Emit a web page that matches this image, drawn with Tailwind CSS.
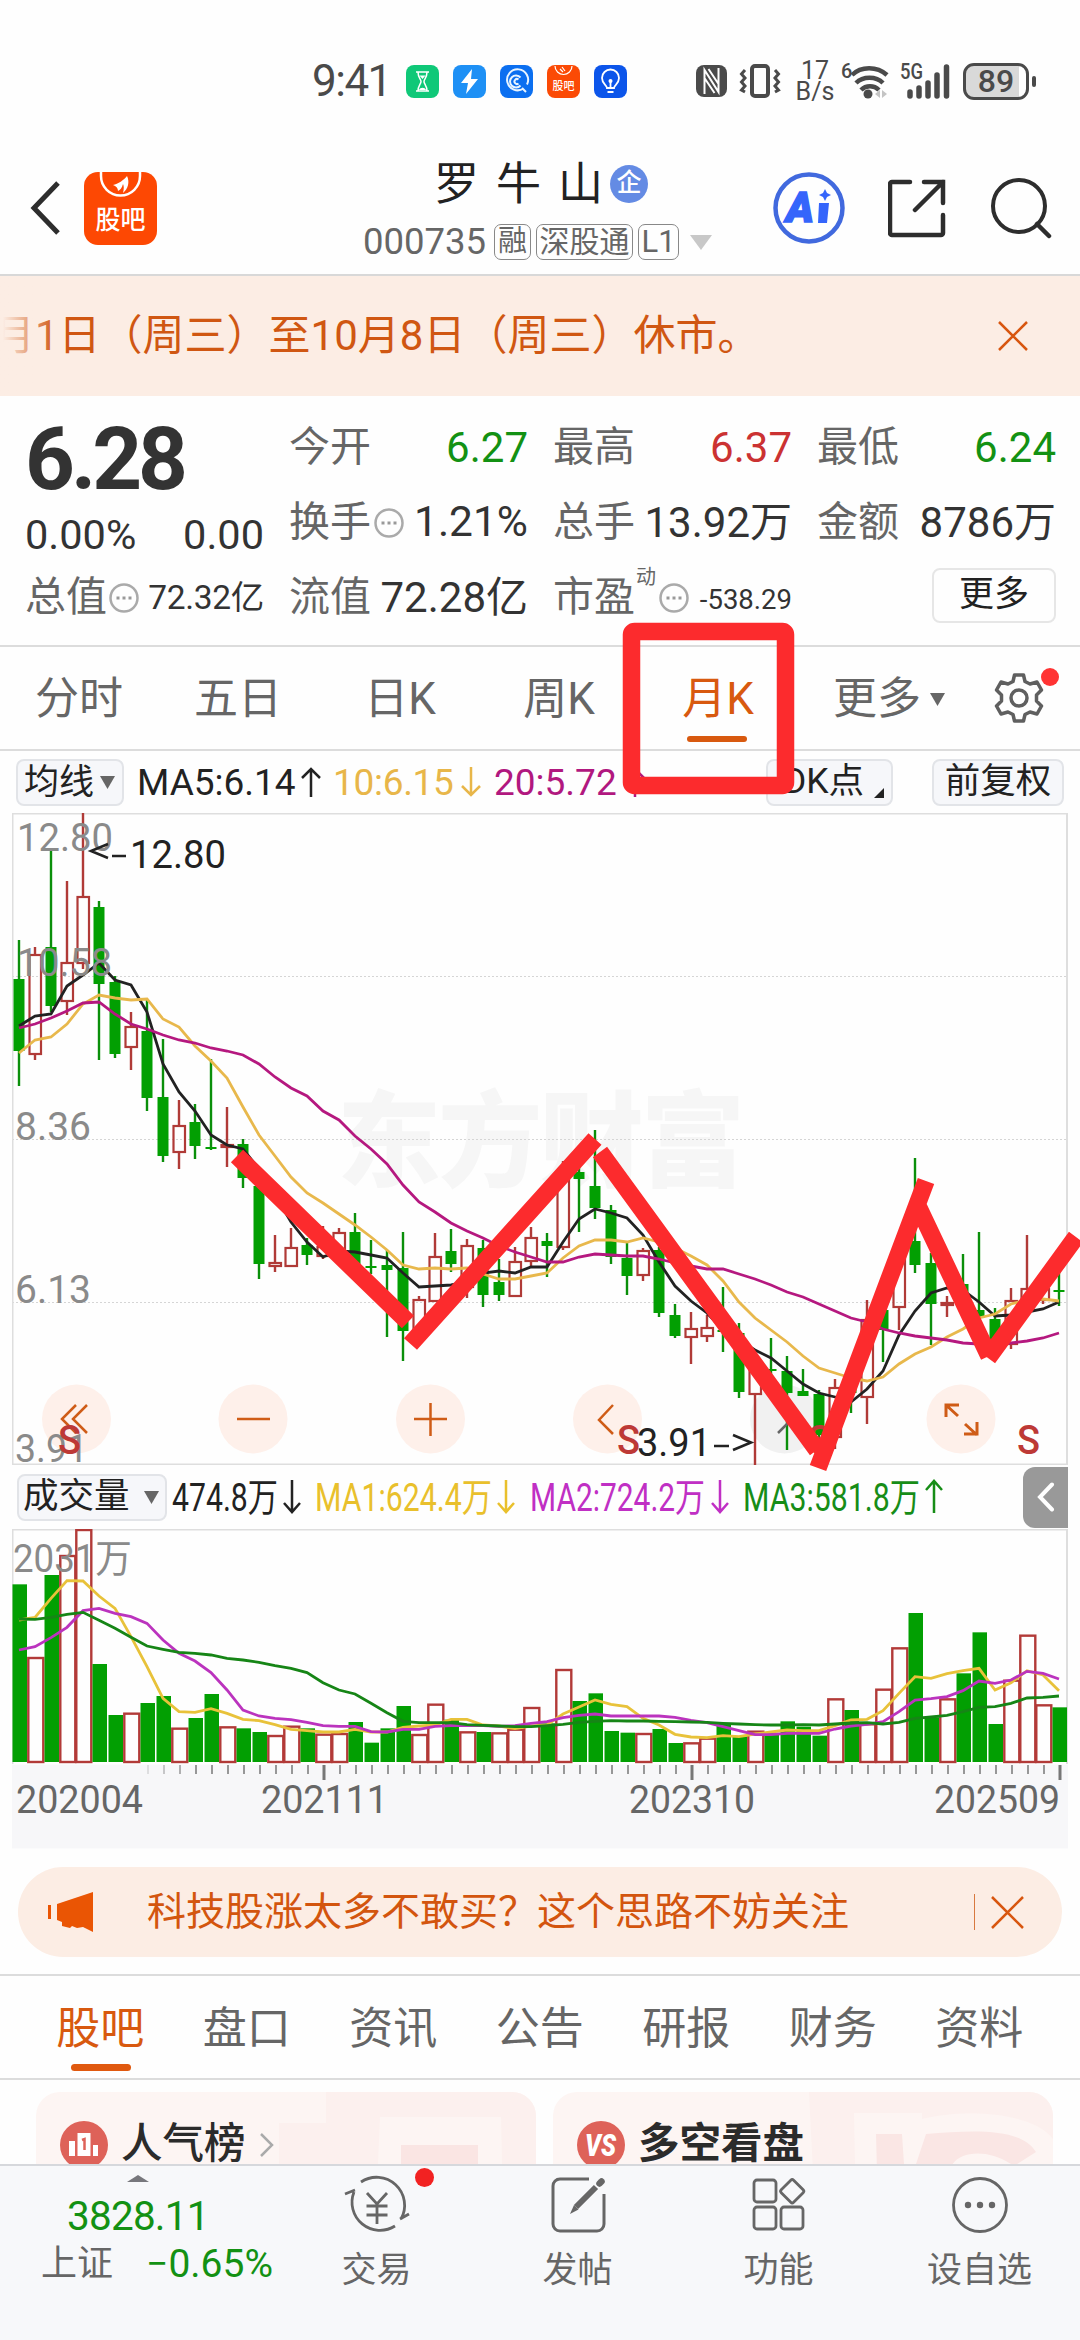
<!DOCTYPE html>
<html lang="zh-CN">
<head>
    <meta charset="UTF-8">
    <meta name="viewport" content="width=1080">
    <title>罗牛山 000735</title>
    <script src="https://cdn.jsdelivr.net/npm/@tailwindcss/browser@4"></script>
    <style>
        body {
            font-family: Roboto, "Noto Sans CJK SC", sans-serif;
        }
    </style>
</head>
<body class="bg-white">
<div class="relative w-[1080px] h-[2340px] overflow-hidden bg-[#fefefe] text-[#333]">

    <!-- status bar -->
    <div class="h-[112px] pt-[50px]">
        <div class="h-[62px] flex items-center pl-[312px] text-[#4a4a4a]">
            <span class="w-[94px] text-[44px] leading-[50px] tracking-[-1.5px]">9:41</span>
            <div class="flex gap-[14px]">
                <svg class="w-[33px] h-[33px]" viewBox="0 0 33 33"><rect width="33" height="33" rx="8" fill="#0fc878"/><path d="M10 7h13M10 26h13M12 7c0 6 3 7 3 9.500s-3 4-3 9.500M21 7c0 6-3 7-3 9.500s3 4 3 9.500" stroke="#fff" stroke-width="1.500" fill="none"/><path d="M13.500 10.500h6l-3 3.500zM13 25c1-3 6-3 7 0z" fill="#fff"/></svg>
                <svg class="w-[33px] h-[33px]" viewBox="0 0 33 33"><rect width="33" height="33" rx="8" fill="#1e90f5"/><path d="M19 4 8 18h7l-2 11 12-15h-7z" fill="#fff"/></svg>
                <svg class="w-[33px] h-[33px]" viewBox="0 0 33 33"><rect width="33" height="33" rx="8" fill="#0b6ff0"/><path d="M23.500 23.500a10.500 10.500 0 1 1 3.500-4M22 23l4 4M20.500 20.500a6 6 0 1 1 0-8M18.500 14.500a2.500 2.500 0 1 0 0 4" stroke="#e8f4ff" stroke-width="2" fill="none"/></svg>
                <svg class="w-[33px] h-[33px]" viewBox="0 0 33 33"><rect width="33" height="33" rx="8" fill="#fb4a05"/><path d="M8 1a8.500 8.500 0 0 0 17 0M13 4l3 3M15 2l3 4" stroke="#fff" stroke-width="1.200" fill="none"/><text x="16.500" y="24.500" font-size="11" font-weight="500" text-anchor="middle" fill="#fff">股吧</text></svg>
                <svg class="w-[33px] h-[33px]" viewBox="0 0 33 33"><rect width="33" height="33" rx="8" fill="#0c55ea"/><path d="M13 23c0-3-5-4-5-10a8.500 8.500 0 0 1 17 0c0 6-5 7-5 10zM13.500 27h6M16.500 16v7" stroke="#fff" stroke-width="1.800" fill="none"/><circle cx="16.500" cy="16" r="2" fill="#fff"/></svg>
            </div>
            <svg class="ml-[69px] w-[31px] h-[32px]" viewBox="0 0 31 32"><rect width="31" height="32" rx="8" fill="#4a4a4a"/><path d="M8.500 29V5l14 22V3M8.500 13l10 15M12.500 4l10 15" stroke="#fefefe" stroke-width="2" fill="none"/></svg>
            <svg class="ml-3 w-[42px] h-[34px]" viewBox="0 0 42 34"><rect x="13" y="2" width="16" height="30" rx="3" fill="none" stroke="#4a4a4a" stroke-width="4"/><path d="M6 6l-3.500 4L6 14l-3.500 4L6 22l-3.500 4L6 28M36 6l3.500 4L36 14l3.500 4L36 22l3.500 4L36 28" fill="none" stroke="#4a4a4a" stroke-width="3"/></svg>
            <div class="ml-[14px] w-[40px] text-center text-[25px] leading-[21px]">17<br>B/s</div>
            <svg class="ml-[5px] w-[52px] h-[40px]" viewBox="0 0 52 40"><text x="1" y="17" font-size="20" font-weight="500" fill="#4a4a4a">6</text><path d="M12 14c9-9 25-9 35 0M16 22c7-7 20-7 27 0M21 29c5-5 13-5 18 0" stroke="#4a4a4a" stroke-width="4.500" fill="none"/><circle cx="28" cy="33" r="4.500" fill="#4a4a4a"/><path d="M40 29v8l-5-4zM42 29v8l5-4z" fill="#c4c4c4"/></svg>
            <svg class="ml-[8px] w-[52px] h-[40px]" viewBox="0 0 52 40"><text x="0" y="18" font-size="22" font-weight="500" fill="#4a4a4a" textLength="23" lengthAdjust="spacingAndGlyphs">5G</text><path d="M10 31v4M19 27v8M28 22v13M37 14v21M46.500 6v29" stroke="#4a4a4a" stroke-width="5.500" stroke-linecap="round"/></svg>
            <div class="ml-[11px] w-[66px] h-[37px] rounded-[11px] border-[3px] border-[#4a4a4a] bg-linear-to-r from-[#d9d9d9] from-88% to-white to-88% text-center text-[32px] font-medium leading-[31px]">89</div>
            <div class="ml-[3px] w-1 h-[11px] rounded-full bg-[#4a4a4a]"></div>
        </div>
    </div>

    <!-- title bar -->
    <div class="h-[164px] pt-[29px] flex border-b-2 border-[#d8d8d8]">
        <svg class="ml-[29px] mt-[38px] w-[34px] h-[58px]" viewBox="0 0 34 58"><path d="M29 4 5 29l24 25" fill="none" stroke="#2d2d2d" stroke-width="5"/></svg>
        <svg class="ml-[21px] mt-[31px] w-[73px] h-[73px]" viewBox="0 0 73 73"><rect width="73" height="73" rx="14" fill="#fd4803"/><path d="M17 0v4a19.500 19.500 0 0 0 39 0V0" fill="none" stroke="#fff" stroke-width="2.500"/><path d="M29 13C34 12 40 8 43 4c3 6 1 13-4 17 1-4 1-7 0-9-1 4-3 6-5 7 0-3-2-5-5-6z" fill="#fff"/><text x="36.500" y="57" font-size="26" font-weight="500" text-anchor="middle" fill="#fff" textLength="50" lengthAdjust="spacingAndGlyphs">股吧</text></svg>
        <div class="ml-[206px] w-[357px] pt-[17px]">
            <div class="h-[52px] flex items-center pl-[71px]">
                <span class="text-[45px] leading-none text-[#222] whitespace-pre w-[172px]"><span class="inline-block w-[62px]">罗</span><span class="inline-block w-[62px]">牛</span><span class="inline-block">山</span></span>
                <span class="ml-[4px] size-[38px] rounded-full bg-[#648be4] text-white text-[25px] font-medium text-center leading-[36px]">企</span>
            </div>
            <div class="mt-[14px] h-9 flex items-center text-[#666]">
                <span class="w-[131px] text-[36.500px] leading-none">000735</span>
                <span class="w-[37px] h-9 rounded-[7px] border border-[#888] text-[29px] leading-[33px] text-center">融</span>
                <span class="ml-[5px] w-[97px] h-9 rounded-[7px] border border-[#888] text-[30px] leading-[33px] text-center">深股通</span>
                <span class="ml-[5px] w-[41px] h-9 rounded-[7px] border border-[#888] text-[31px] leading-[33px] text-center">L1</span>
                <svg class="ml-[11px] w-[22px] h-[15px]" viewBox="0 0 22 15"><path d="M0 0h22L11 15z" fill="#c8c8c8"/></svg>
            </div>
        </div>
        <svg class="ml-[53px] mt-[31px] w-[72px] h-[72px]" viewBox="0 0 72 72"><circle cx="36" cy="36" r="33.500" fill="none" stroke="#4169de" stroke-width="4.500"/><text x="13" y="50" font-size="43" font-weight="900" font-style="italic" fill="#3565fb" stroke="#3565fb" stroke-width="1.500" textLength="28" lengthAdjust="spacingAndGlyphs">A</text><path d="M46 31h10l-2 20h-9zM52 17l2 4 4 2-4 2-2 4-2-4-4-2 4-2z" fill="#3565fb"/></svg>
        <svg class="ml-[43px] mt-[38px] w-[58px] h-[60px]" viewBox="0 0 58 60"><path d="M22 3H4a2 2 0 0 0-2 2v49a2 2 0 0 0 2 2h49a2 2 0 0 0 2-2V36M36 3h19v21M55 3 27 31" fill="none" stroke="#2d2d2d" stroke-width="4.500" stroke-linecap="round"/></svg>
        <svg class="ml-[44px] mt-[35px] w-[62px] h-[64px]" viewBox="0 0 62 64"><circle cx="29" cy="30" r="26" fill="none" stroke="#2d2d2d" stroke-width="4"/><path d="m47 48 12 12" stroke="#2d2d2d" stroke-width="4.500" stroke-linecap="round"/></svg>
    </div>

    <!-- holiday notice -->
    <div class="relative h-[120px] bg-[#fcede4] flex items-center text-[#d05712]">
        <span class="ml-[-7px] w-[999px] text-[42px] leading-[60px] whitespace-nowrap">月1日（周三）至10月8日（周三）休市。</span>
        <svg class="ml-[6px] w-[30px] h-[30px]" viewBox="0 0 30 30"><path d="m1 1 28 28M29 1 1 29" stroke="#d8560f" stroke-width="2.500"/></svg>
        <div class="absolute left-0 top-0 h-full w-[56px] bg-linear-to-r from-[#fcede4] from-5% to-transparent"></div>
    </div>

    <!-- quote -->
    <div class="h-[251px] pl-[25px] pt-[14px] flex border-b-2 border-[#dcdcdc]">
        <div class="w-[264px]">
            <div class="h-[98px] flex items-center text-[87px] font-bold leading-none tracking-[-4px]">6.28</div>
            <div class="h-[54px] w-[239px] flex items-center justify-between text-[41.500px] leading-none"><span>0.00%</span><span>0.00</span></div>
            <div class="h-[71px] w-[239px] flex items-center leading-none"><span class="text-[41px] text-[#666]">总值</span><svg class="ml-[2px] w-[30px] h-[30px]" viewBox="0 0 30 30"><circle cx="15" cy="15" r="13.500" fill="none" stroke="#aaa" stroke-width="2.500"/><path d="M7.500 15h3M13.500 15h3M19.500 15h3" stroke="#999" stroke-width="3"/></svg><span class="ml-auto text-[33.500px] tracking-[-0.3px]">72.32亿</span></div>
        </div>
        <div class="w-[264px]">
            <div class="h-[75px] w-[239px] flex items-center justify-between text-[41px] leading-none"><span class="text-[#666]">今开</span><span class="text-[42px] text-[#139113]">6.27</span></div>
            <div class="h-[75px] w-[239px] flex items-center text-[41px] leading-none"><span class="text-[#666]">换手</span><svg class="ml-[3px] w-[30px] h-[30px]" viewBox="0 0 30 30"><circle cx="15" cy="15" r="13.500" fill="none" stroke="#aaa" stroke-width="2.500"/><path d="M7.500 15h3M13.500 15h3M19.500 15h3" stroke="#999" stroke-width="3"/></svg><span class="ml-auto text-[42.500px]">1.21%</span></div>
            <div class="h-[75px] w-[239px] flex items-center justify-between text-[41px] leading-none"><span class="text-[#666]">流值</span><span class="text-[42px]">72.28亿</span></div>
        </div>
        <div class="w-[264px]">
            <div class="h-[75px] w-[239px] flex items-center justify-between text-[41px] leading-none"><span class="text-[#666]">最高</span><span class="text-[42px] text-[#cb3232]">6.37</span></div>
            <div class="h-[75px] w-[239px] flex items-center justify-between text-[41px] leading-none"><span class="text-[#666]">总手</span><span class="text-[42px]">13.92万</span></div>
            <div class="h-[75px] w-[239px] flex items-center leading-none"><span class="text-[41px] text-[#666]">市盈</span><span class="text-[20px] text-[#666] self-start mt-[7px] ml-[1px]">动</span><svg class="ml-[3px] w-[30px] h-[30px]" viewBox="0 0 30 30"><circle cx="15" cy="15" r="13.500" fill="none" stroke="#aaa" stroke-width="2.500"/><path d="M7.500 15h3M13.500 15h3M19.500 15h3" stroke="#999" stroke-width="3"/></svg><span class="ml-auto mt-1 text-[27.500px]">-538.29</span></div>
        </div>
        <div class="w-[239px]">
            <div class="h-[75px] flex items-center justify-between text-[41px] leading-none"><span class="text-[#666]">最低</span><span class="text-[42px] text-[#139113]">6.24</span></div>
            <div class="h-[75px] flex items-center justify-between text-[41px] leading-none"><span class="text-[#666]">金额</span><span class="text-[42px]">8786万</span></div>
            <div class="h-[71px] flex items-center"><span class="ml-auto w-[124px] h-[55px] rounded-lg border-2 border-[#e6e6e6] text-[35px] leading-[50px] text-center text-[#222]">更多</span></div>
        </div>
    </div>

    <!-- period tabs -->
    <div class="h-[104px] pt-[2px] flex items-center border-b-2 border-[#dcdcdc] text-[44px] leading-none text-[#666]">
        <span class="w-[158px] text-center">分时</span>
        <span class="w-[160px] text-center">五日</span>
        <span class="w-[164px] text-center">日K</span>
        <span class="w-[154px] text-center">周K</span>
        <div class="relative w-[164px] text-center text-[#d8590f]">月K<div class="absolute left-[51px] top-[59px] w-[60px] h-[6px] rounded-full bg-[#d8590f]"></div></div>
        <span class="ml-[33px]">更多</span>
        <svg class="ml-[9px] w-[15px] h-[13px]" viewBox="0 0 15 13"><path d="M0 0h15L7.500 13z" fill="#666"/></svg>
        <div class="relative ml-[47px] w-[54px] h-[54px]">
            <svg class="w-[54px] h-[54px]" viewBox="0 0 54 54" fill="none" stroke="#5f5f5f" stroke-width="3.500" stroke-linejoin="round"><path d="M22.500 3h9l1.500 6.500 5 2.500 7-2 4.500 8-5 5v6l5 5-4.500 8-7-2-5 2.500-1.500 6.500h-9L21 42.500 16 40l-7 2-4.500-8 5-5v-6l-5-5L9 10l7 2 5-2.500z"/><circle cx="27" cy="26" r="8"/></svg>
            <div class="absolute left-[49px] top-[-4px] size-[18px] rounded-full bg-[#f33]"></div>
        </div>
    </div>

    <!-- moving averages -->
    <div class="h-[62px] flex items-center pl-4 leading-none">
        <div class="w-[108px] h-[47px] rounded-lg border-2 border-[#e2e4e8] bg-[#f6f7fa] flex items-center pl-[6px] text-[35px] text-[#222]">均线<svg class="ml-[6px] w-[15px] h-[13px]" viewBox="0 0 15 13"><path d="M0 0h15L7.500 13z" fill="#666"/></svg></div>
        <span class="ml-[13px] w-[164px] text-[37px] text-[#222]">MA5:6.14</span>
        <svg class="w-[20px] h-[30px]" viewBox="0 0 20 30"><path d="M10 30V2M1 11l9-9 9 9" fill="none" stroke="#222" stroke-width="2.500"/></svg>
        <span class="ml-[12px] w-[128px] text-[37px] tracking-[-0.3px] text-[#e8b649]">10:6.15</span>
        <svg class="w-[20px] h-[30px]" viewBox="0 0 20 30"><path d="M10 0v28M1 19l9 9 9-9" fill="none" stroke="#e8b649" stroke-width="2.500"/></svg>
        <span class="ml-[13px] w-[131px] text-[37px] text-[#b1187f]">20:5.72</span>
        <svg class="w-[20px] h-[30px]" viewBox="0 0 20 30"><path d="M10 30V2M1 11l9-9 9 9" fill="none" stroke="#b1187f" stroke-width="2.500"/></svg>
        <div class="ml-[121px] w-[127px] h-[47px] rounded-lg border-2 border-[#e2e4e8] bg-[#f6f7fa] flex items-center pl-[15px] text-[35.500px] text-[#222]">DK点<svg class="ml-[10px] mt-[22px] w-[10px] h-[10px]" viewBox="0 0 10 10"><path d="M10 0v10H0z" fill="#222"/></svg></div>
        <div class="ml-[39px] w-[132px] h-[47px] rounded-lg border-2 border-[#e2e4e8] bg-[#f6f7fa] flex items-center justify-center text-[35.500px] text-[#222]">前复权</div>
    </div>

    <!-- K line chart -->
    <div class="h-[652px] px-3">
        <svg id="kline" class="w-[1056px] h-[652px]" viewBox="12 813 1056 652"></svg>
    </div>

    <!-- volume header -->
    <div class="h-[64px] flex items-center pl-[17px] leading-none">
        <div class="w-[150px] h-[47px] rounded-lg border-2 border-[#e2e4e8] bg-[#f6f7fa] flex items-center pl-[4px] text-[35.500px] text-[#222]">成交量<svg class="ml-[14px] w-[15px] h-[13px]" viewBox="0 0 15 13"><path d="M0 0h15L7.500 13z" fill="#666"/></svg></div>
        <svg class="ml-[5px] w-[790px] h-[50px]" viewBox="172 1472 790 50" font-size="39" fill="none" stroke-width="2.500">
            <text x="172" y="1511" fill="#222" textLength="106" lengthAdjust="spacingAndGlyphs">474.8万</text>
            <path d="M292 1480v32M284 1503l8 9 8-9" stroke="#222"/>
            <text x="315" y="1511" fill="#e9c02c" textLength="177" lengthAdjust="spacingAndGlyphs">MA1:624.4万</text>
            <path d="M506 1480v32M498 1503l8 9 8-9" stroke="#e9c02c"/>
            <text x="530" y="1511" fill="#c02fc4" textLength="175" lengthAdjust="spacingAndGlyphs">MA2:724.2万</text>
            <path d="M720 1480v32M712 1503l8 9 8-9" stroke="#c02fc4"/>
            <text x="743" y="1511" fill="#178d17" textLength="177" lengthAdjust="spacingAndGlyphs">MA3:581.8万</text>
            <path d="M934 1513v-32M926 1490l8-9 8 9" stroke="#178d17"/>
        </svg>
        <div class="ml-auto mr-3 w-[45px] h-[61px] rounded-l-[12px] bg-[#999] flex items-center justify-center">
            <svg class="w-[18px] h-[30px]" viewBox="0 0 18 30"><path d="M15 2.500 3 15l12 12.500" fill="none" stroke="#fff" stroke-width="4" stroke-linecap="round"/></svg>
        </div>
    </div>

    <!-- volume chart -->
    <div class="h-[320px] px-3">
        <svg id="volume" class="w-[1056px] h-[320px]" viewBox="12 1529 1056 320"></svg>
    </div>

    <!-- promo -->
    <div class="mt-[18px] mx-[18px] h-[90px] rounded-[45px] bg-[#fcede4] flex items-center text-[#d3550e]">
        <svg class="ml-[29px] w-[47px] h-[40px]" viewBox="0 0 47 40"><path d="M1 13h3v14H1zM10 12 46 0v40l-10-5-6 1-5-2-2 2-8-2v-4l-5-2z" fill="#ea5504"/></svg>
        <span class="ml-[53px] text-[39px] leading-none whitespace-nowrap">科技股涨太多不敢买？这个思路不妨关注</span>
        <div class="ml-auto w-[1.500px] h-9 bg-[#d8793f]"></div>
        <svg class="ml-[16px] mr-[38px] w-[33px] h-[33px]" viewBox="0 0 33 33"><path d="m1 1 31 31M32 1 1 32" stroke="#d8560f" stroke-width="2.500"/></svg>
    </div>

    <!-- section tabs -->
    <div class="mt-[17px] h-[106px] flex items-center border-y-2 border-[#dcdcdc] pt-[3px] pl-[27px] text-[44px] leading-none text-[#666]">
        <div class="relative w-[146.500px] text-center text-[#d8590f]">股吧<div class="absolute left-[44px] top-[57px] w-[60px] h-[7px] rounded-full bg-[#e0590f]"></div></div>
        <span class="w-[146.500px] text-center">盘口</span>
        <span class="w-[146.500px] text-center">资讯</span>
        <span class="w-[146.500px] text-center">公告</span>
        <span class="w-[146.500px] text-center">研报</span>
        <span class="w-[146.500px] text-center">财务</span>
        <span class="w-[146.500px] text-center">资料</span>
    </div>

    <!-- cards, cut off by the bottom bar -->
    <div class="h-[84px] pt-[12px] px-[36px] flex gap-[17px] overflow-hidden">
        <div class="relative w-[500px] h-[120px] shrink-0 rounded-[24px] bg-[#fdf5f3] overflow-hidden">
            <svg class="absolute left-0 top-0 w-[500px] h-[120px]" viewBox="0 0 500 120"><path d="M290 0h210v120H243V31h47z" fill="#fcf0ee"/><path d="M344 25h121l2 95H340z" fill="#fdf5f3"/><path d="M365 53h77v67h-77z" fill="#fae5e3"/></svg>
            <div class="relative flex items-center pl-[24px] pt-[29px]">
                <svg class="w-[48px] h-[48px]" viewBox="0 0 48 48"><circle cx="24" cy="24" r="24" fill="#de6259"/><path d="M9 20h6v15H9zM17.500 12h13v23h-13zM33 24h5v11h-5z" fill="#fff"/><path d="M22 19l2.500-1v11" stroke="#de6259" stroke-width="2.500" fill="none"/></svg>
                <span class="ml-[13px] mb-[3px] text-[41.500px] font-medium leading-none text-[#2b2b2b]">人气榜</span>
                <svg class="ml-[13px] w-[15px] h-[24px]" viewBox="0 0 15 24"><path d="m2 1 11 11L2 23" fill="none" stroke="#aaa" stroke-width="2.500"/></svg>
            </div>
        </div>
        <div class="relative w-[500px] h-[120px] shrink-0 rounded-[24px] bg-[#fdf5f3] overflow-hidden">
            <svg class="absolute left-0 top-0 w-[500px] h-[120px]" viewBox="0 0 500 120"><path d="M256 0h244v120H262z" fill="#fcf0ee"/><path d="M301 21h68v6c40-10 110-8 131 20v73H303z" fill="#fdf5f3"/><path d="M323 42h26l4 60 20-60c50-4 95-6 110 18l-22 14c-28-20-60-14-64 4v42H325z" fill="#fae6e4"/></svg>
            <div class="relative flex items-center pl-[24px] pt-[29px]">
                <svg class="w-[48px] h-[48px]" viewBox="0 0 48 48"><circle cx="24" cy="24" r="24" fill="#de6259"/><text x="8" y="35" font-size="31" font-weight="900" font-style="italic" fill="#fff" textLength="31" lengthAdjust="spacingAndGlyphs">VS</text></svg>
                <span class="ml-[13px] mb-[3px] text-[41.500px] font-bold leading-none text-[#2b2b2b]">多空看盘</span>
            </div>
        </div>
    </div>

    <!-- bottom bar -->
    <div class="h-[178px] flex bg-[#f7f8fa] border-t-2 border-[#d6d8dc] text-[#666]">
        <div class="w-[276px] pt-[9px]">
            <svg class="ml-[127px] w-[22px] h-[7px]" viewBox="0 0 22 7"><path d="M0 7 11 0l11 7z" fill="#77777c"/></svg>
            <div class="mt-[13px] ml-[67px] h-[42px] text-[40.500px] leading-[42px] tracking-[-0.800px] text-[#139113]">3828.11</div>
            <div class="mt-[4px] ml-[41px] w-[232px] h-[46px] flex items-center justify-between leading-none"><span class="text-[36px]">上证</span><span class="text-[39px] text-[#139113]">&minus;0.65%</span></div>
        </div>
        <div class="relative w-[201px] flex flex-col items-center pt-[7px]">
            <svg class="w-[66px] h-[64px]" viewBox="0 0 66 64" fill="none" stroke="#666" stroke-width="2.800"><path d="M17 9A28 28 0 0 1 57 46M56 46l9-5M51 53A28 28 0 0 1 10 19M1 21l10-4M23 20l10 11 10-11M33 31v20M22.500 33h21M22.500 42h21"/></svg>
            <div class="absolute left-[139px] top-[2px] size-[19px] rounded-full bg-[#f22222]"></div>
            <span class="mt-[16px] text-[35px] leading-none">交易</span>
        </div>
        <div class="w-[201px] flex flex-col items-center pt-[7px]">
            <svg class="w-[60px] h-[64px]" viewBox="0 0 60 64" fill="none" stroke="#666" stroke-width="3"><path d="M41 6H12a7 7 0 0 0-7 7v38a7 7 0 0 0 7 7h37a7 7 0 0 0 7-7V21"/><path d="m53.500 8.500-2 2" stroke-width="6.500" stroke-linecap="round"/><path d="M48 14 28 34" stroke-width="6"/><path d="m26 32-4 9 8.500-4.500z" fill="#666" stroke="none"/></svg>
            <span class="mt-[16px] text-[35px] leading-none">发帖</span>
        </div>
        <div class="w-[201px] flex flex-col items-center pt-[7px]">
            <svg class="w-[60px] h-[64px]" viewBox="0 0 60 64" fill="none" stroke="#666" stroke-width="2.800" stroke-linejoin="round"><rect x="5" y="7" width="22" height="22" rx="3"/><rect x="5" y="34" width="22" height="22" rx="3"/><rect x="32" y="34" width="22" height="22" rx="3"/><rect x="34.500" y="9.500" width="17.500" height="17.500" rx="2" transform="rotate(45 43.200 18.200)"/></svg>
            <span class="mt-[16px] text-[35px] leading-none">功能</span>
        </div>
        <div class="w-[201px] flex flex-col items-center pt-[7px]">
            <svg class="w-[60px] h-[64px]" viewBox="0 0 60 64"><circle cx="30" cy="32" r="26.500" fill="none" stroke="#666" stroke-width="2.800"/><circle cx="18" cy="32" r="3.200" fill="#666"/><circle cx="30" cy="32" r="3.200" fill="#666"/><circle cx="42" cy="32" r="3.200" fill="#666"/></svg>
            <span class="mt-[16px] text-[35px] leading-none">设自选</span>
        </div>
    </div>

    <!-- red marker strokes over the chart -->
    <svg class="absolute left-0 top-0 w-[1080px] h-[1500px] pointer-events-none" viewBox="0 0 1080 1500" fill="none" stroke="#fc2b2d" stroke-width="17.500">
        <rect x="631.500" y="631.500" width="154" height="154" rx="3"/>
        <path d="M237 1156 408 1322M410.500 1344 595 1139M600 1152 817 1450M818 1468 926 1181M917 1204 989 1356M988 1358 1076 1237"/>
    </svg>
</div>

<script>
    const X0 = 19, STEP = 16;
    const x = i => X0 + STEP * i;
    const line = (pts, color, w) => `<polyline points="${pts.map((y, i) => x(i) + ',' + y).join(' ')}" fill="none" stroke="${color}" stroke-width="${w}"/>`;
    const label = (tx, y, s, len, color) => `<text x="${tx}" y="${y}" font-size="39" fill="${color}" textLength="${len}" lengthAdjust="spacingAndGlyphs">${s}</text>`;

    // [up, high, body top, body bottom, low]
    const candles = [
        [0,940,979,1051,1086],[1,947,955,1054,1060],[0,850,947,1006,1012],[1,881,963,1001,1015],[1,813,897,963,969],[0,901,907,984,1060],
        [0,976,982,1054,1058],[1,1012,1027,1047,1070],[0,999,1031,1098,1111],[0,1039,1097,1156,1162],[1,1100,1126,1152,1169],[0,1104,1122,1146,1159],
        [0,1059,1147,1149,1150],[1,1107,1145,1147,1167],[0,1139,1144,1178,1188],[0,1180,1186,1264,1279],[1,1235,1263,1266,1272],[1,1228,1248,1266,1267],
        [0,1238,1245,1255,1265],[1,1226,1247,1256,1259],[1,1228,1233,1251,1253],[0,1213,1232,1264,1266],[0,1240,1266,1268,1274],[0,1250,1265,1270,1337],
        [0,1232,1268,1331,1361],[1,1296,1300,1335,1340],[1,1233,1257,1301,1302],[0,1229,1251,1264,1272],[1,1239,1246,1287,1298],[0,1240,1248,1295,1307],
        [0,1259,1282,1295,1301],[1,1247,1262,1296,1296],[1,1227,1238,1261,1267],[0,1233,1241,1246,1277],[1,1161,1180,1247,1250],[0,1167,1172,1179,1232],
        [0,1130,1186,1208,1219],[0,1205,1210,1257,1264],[0,1243,1258,1276,1295],[1,1248,1251,1275,1281],[0,1247,1250,1313,1317],[0,1304,1315,1336,1338],
        [1,1312,1329,1337,1364],[1,1315,1328,1336,1342],[0,1287,1330,1332,1352],[0,1323,1333,1392,1398],[1,1365,1370,1394,1466],[0,1338,1369,1371,1377],
        [0,1356,1371,1393,1450],[0,1369,1391,1396,1396],[0,1390,1394,1435,1440],[1,1379,1388,1437,1449],[0,1370,1375,1393,1413],[1,1300,1320,1397,1424],
        [0,1300,1310,1330,1362],[1,1240,1255,1307,1330],[0,1158,1241,1265,1273],[0,1253,1263,1304,1345],[1,1296,1303,1305,1317],[0,1254,1284,1300,1305],
        [0,1232,1310,1318,1320],[0,1308,1319,1340,1347],[1,1288,1301,1344,1349],[1,1235,1289,1310,1315],[1,1278,1289,1300,1304],[0,1272,1290,1292,1306]
    ];
    const ma5 = [1026,1016,1014,986,975,963,980,985,1012,1064,1092,1111,1135,1145,1149,1169,1195,1222,1242,1257,1251,1252,1255,1258,1273,1287,1286,1285,1282,1273,1271,1273,1267,1267,1242,1219,1209,1213,1218,1235,1262,1286,1301,1313,1330,1340,1350,1358,1371,1384,1393,1397,1402,1389,1371,1335,1311,1293,1288,1290,1302,1316,1315,1312,1309,1302];
    const ma10 = [1053,1040,1037,1024,1004,995,998,1000,999,1019,1027,1046,1061,1078,1107,1135,1156,1177,1193,1203,1214,1225,1237,1250,1265,1269,1268,1269,1268,1274,1279,1279,1276,1273,1258,1246,1240,1240,1242,1238,1242,1248,1256,1265,1281,1302,1318,1330,1342,1356,1368,1373,1378,1381,1377,1364,1354,1347,1337,1329,1318,1314,1304,1300,1299,1301];
    const ma20 = [1028,1024,1018,1011,1003,1002,1014,1024,1029,1035,1040,1043,1048,1051,1055,1064,1077,1088,1096,1111,1120,1136,1149,1164,1185,1202,1212,1223,1231,1238,1246,1252,1257,1262,1262,1257,1254,1255,1256,1256,1259,1263,1266,1269,1269,1274,1279,1285,1292,1297,1304,1311,1318,1322,1329,1333,1336,1338,1340,1343,1344,1343,1343,1341,1338,1333];

    let k = '<rect x="12" y="813" width="1056" height="652" fill="#fefefe"/>';
    k += '<text x="337" y="1179" font-size="104" font-weight="900" fill="#f6f6f6" textLength="408">东方财富</text>';
    for (const y of [976.5, 1139.5, 1302.5]) k += `<path d="M12 ${y}h1056" stroke="#d5d5d5" stroke-dasharray="2 2"/>`;
    k += '<rect x="12.500" y="813.500" width="1054.500" height="651" fill="none" stroke="#dedede" stroke-width="2"/>';
    // round chart buttons
    for (const cx of [76.5, 253, 430.5, 607.5, 961]) k += `<circle cx="${cx}" cy="1419" r="34.500" fill="#fef0ea"/>`;
    k += '<circle cx="784.500" cy="1419" r="34.500" fill="#f1f1f1"/>';
    candles.forEach(([up, h, t, b, l], i) => {
        const c = up ? '#b03a37' : '#0a8f0a', cx = x(i);
        if (up) {
            k += `<path d="M${cx} ${h}V${t}M${cx} ${b}V${l}" stroke="${c}" stroke-width="2.400"/>`;
            k += `<rect x="${cx - 5.5}" y="${t}" width="11.500" height="${b - t}" fill="none" stroke="${c}" stroke-width="2.200"/>`;
        } else {
            k += `<path d="M${cx} ${h}V${l}" stroke="${c}" stroke-width="2.400"/>`;
            k += `<rect x="${cx - 5.5}" y="${t}" width="11" height="${b - t}" fill="#029f02"/>`;
        }
    });
    k += line(ma5, '#222', 2.8) + line(ma10, '#e8b84c', 2.8) + line(ma20, '#b5187f', 2.8);
    k += '<g fill="none" stroke="#cf5c17" stroke-width="2.500"><path d="M76 1405l-14 14 14 14M87 1405l-14 14 14 14M237 1419h33M414 1419h33M430.500 1403v33M613 1405l-14 15 14 14"/><path d="M946 1417v-12h13M946 1405l12 11M965 1424l12 11M977 1422v12h-13" stroke-width="3"/></g>';
    k += '<path d="M778 1433l14-14" stroke="#666" stroke-width="2.500"/>';
    k += label(17, 851, '12.80', 96, '#8a8a8a') + label(17, 975.5, '10.58', 95, '#8a8a8a') + label(15, 1139.5, '8.36', 76, '#8a8a8a') + label(15, 1302.5, '6.13', 76, '#8a8a8a') + label(15, 1461.5, '3.91', 73, '#8a8a8a');
    k += label(130, 868, '12.80', 96, '#222') + label(637, 1456, '3.91', 74, '#222');
    k += '<path d="M108 844l-17 7 17 7M112 856h14M714 1446h15M733 1435l18 7.500-18 7.500" fill="none" stroke="#222" stroke-width="2.600"/>';
    for (const sx of [58, 617, 808, 1017]) k += `<text x="${sx}" y="1453.500" font-size="40" font-weight="500" fill="#bd3936" textLength="23" lengthAdjust="spacingAndGlyphs">S</text>`;
    document.getElementById('kline').innerHTML = k;

    // bar tops and averages are in thirds of a pixel, offset from 1460
    const vy = v => 1460 + v / 3;
    const vol = [376,594,348,288,210,615,768,761,732,711,806,777,705,802,808,819,828,800,808,824,822,789,851,808,741,825,734,782,817,819,820,809,744,793,630,726,703,816,821,822,810,852,850,836,795,832,815,822,787,803,830,718,753,793,689,565,462,775,718,643,520,795,662,527,736,745];
    const volUp = [1,3,4,7,10,13,16,17,19,20,25,26,28,30,31,32,34,39,42,43,46,51,53,54,55,58,62,63,64];
    const v5 = [480,472,415,362,363,408,445,530,620,715,755,757,746,760,778,782,794,808,812,816,816,808,816,816,802,798,795,778,778,795,798,806,798,795,762,741,720,733,740,775,795,823,831,833,827,830,822,816,810,812,812,797,780,778,752,700,650,655,641,632,625,690,668,632,645,692];
    const v10 = [570,560,533,502,452,445,460,470,490,540,580,603,638,690,750,768,775,779,787,797,799,799,815,816,808,808,799,797,797,797,799,797,790,785,773,766,762,768,768,768,768,772,781,788,800,812,824,824,820,820,820,807,798,793,785,755,720,716,710,692,663,670,660,634,640,657];
    const v20 = [477,478,472,463,457,481,505,532,558,568,577,580,585,595,600,607,617,625,638,668,690,702,730,758,784,788,788,788,794,796,798,800,800,797,793,787,784,782,783,783,784,785,786,787,790,792,794,795,795,794,795,792,789,788,792,787,775,771,766,755,742,740,730,714,712,708];

    let v = '<path d="M12 1764.500h1056v84H12z" fill="#f7f7f9"/><path d="M12.500 1764V1529.500h1054.500V1764" fill="none" stroke="#dedede" stroke-width="2"/>';
    vol.forEach((t, i) => {
        const y = vy(t), cx = x(i) + 0.5;
        if (volUp.includes(i)) v += `<rect x="${cx - 7.2}" y="${y}" width="15" height="${1762 - y}" fill="#fefefe" stroke="#b23a38" stroke-width="2.400"/>`;
        else v += `<rect x="${cx - 7}" y="${y - 1}" width="14.500" height="${1763 - y}" fill="#029f02"/>`;
    });
    v += line(v5.map(vy), '#e8c23a', 2.8) + line(v10.map(vy), '#bb33be', 2.8) + line(v20.map(vy), '#168516', 2.8);
    for (let i = 8; i < 66; i++) {
        const major = i === 19 || i === 42 || i === 65;
        v += `<path d="M${x(i) + 1} 1765v${major ? 15 : 9}" stroke="#777" stroke-width="${major ? 3 : 1.5}" opacity="${Math.min(1, (i - 7) / 4)}"/>`;
    }
    v += label(13, 1572, '2031万', 119, '#8a8a8a');
    v += label(16, 1813, '202004', 127, '#666') + label(261, 1813, '202111', 127, '#666') + label(629, 1813, '202310', 126, '#666') + label(934, 1813, '202509', 126, '#666');
    document.getElementById('volume').innerHTML = v;
</script>
</body>
</html>
